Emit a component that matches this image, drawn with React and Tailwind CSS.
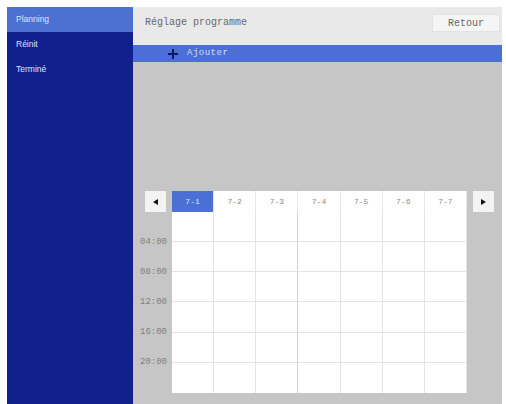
import React from "react";

const menu = ["Planning", "Réinit", "Terminé"];
const days = ["7-1", "7-2", "7-3", "7-4", "7-5", "7-6", "7-7"];
const hours = ["04:00", "08:00", "12:00", "16:00", "20:00"];

function ArrowButton({ dir }) {
  return (
    <div className="w-[21px] h-[21px] bg-[#f3f3f3] flex items-center justify-center">
      {dir === "left" ? (
        <div className="w-0 h-0 border-y-[3.5px] border-y-transparent border-r-[5px] border-r-[#111]" />
      ) : (
        <div className="w-0 h-0 border-y-[3.5px] border-y-transparent border-l-[5px] border-l-[#111]" />
      )}
    </div>
  );
}

export default function App() {
  return (
    <div className="w-[506px] h-[404px] bg-white pt-[7px] pl-[7px] pr-[4px] flex overflow-hidden">
      {/* Left menu */}
      <div className="w-[126px] bg-[#10218e] flex flex-col font-['Liberation_Sans',sans-serif] text-[8.5px] text-[#dde3ff]">
        {menu.map((item, idx) => (
          <div
            key={item}
            className={`h-[25px] flex items-center pl-[9px] ${idx === 0 ? "bg-[#4d70d3] h-[24px]" : ""}`}
          >
            {item}
          </div>
        ))}
      </div>

      {/* Main panel */}
      <div className="flex-1 flex flex-col bg-[#c6c6c6] font-['Liberation_Mono',monospace]">
        <div className="h-[38px] bg-[#e9e9e9] flex items-start justify-between">
          <span className="text-[10px] text-[#6a6a6a] pl-[12px] pt-[11px] leading-[10px]">Réglage programme</span>
          <div className="mt-[7px] mr-[2px] w-[68px] h-[18px] bg-[#f5f5f5] border border-[#e2e2e2] flex items-center justify-center text-[10px] text-[#666]">
            Retour
          </div>
        </div>

        <div className="h-[17px] bg-[#4b6fd5] flex items-center pl-[35px] gap-[9px]">
          <span className="relative w-[10px] h-[10px]">
            <span className="absolute left-0 top-[4px] w-[10px] h-[2px] bg-[#0c1a5c]" />
            <span className="absolute top-0 left-[4px] w-[2px] h-[10px] bg-[#0c1a5c]" />
          </span>
          <span className="text-[9px] text-[#d4defc] tracking-[0.5px]">Ajouter</span>
        </div>

        {/* Week schedule */}
        <div className="mt-[129px] grid grid-cols-[39px_295px_27px] grid-rows-[21px_181px]">
          <div className="pl-[12px]">
            <ArrowButton dir="left" />
          </div>
          <div className="grid grid-cols-7 bg-white">
            {days.map((d, i) => (
              <div
                key={d}
                className={`flex items-center justify-center text-[8px] border-r border-[#e8e8e8] ${
                  i === 0 ? "bg-[#4b6fd5] text-[#dde5ff]" : "text-[#8c8c8c]"
                }`}
              >
                {d}
              </div>
            ))}
          </div>
          <div className="pl-[6px]">
            <ArrowButton dir="right" />
          </div>

          <div className="flex flex-col items-end pr-[5px] pt-[25px] gap-[20px]">
            {hours.map((h) => (
              <span key={h} className="h-[10px] leading-[10px] text-[9px] text-[#808080]">
                {h}
              </span>
            ))}
          </div>
          <div className="grid grid-cols-7 grid-rows-6 bg-white">
            {Array.from({ length: 42 }).map((_, i) => (
              <div
                key={i}
                className={`border-b border-r border-[#e4e4e4] ${i % 7 === 2 ? "border-r-[#d2d2d2]" : ""} ${
                  i >= 35 ? "border-b-0" : ""
                }`}
              />
            ))}
          </div>
          <div />
        </div>
      </div>
    </div>
  );
}
